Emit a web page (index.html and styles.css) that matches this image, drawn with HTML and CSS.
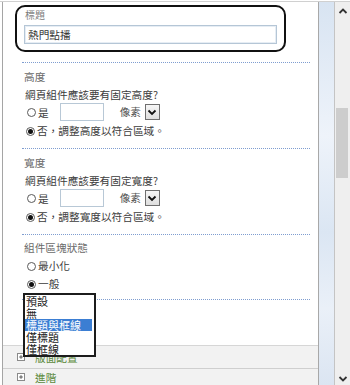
FILE: index.html
```html
<!DOCTYPE html>
<html lang="zh-Hant">
<head>
<meta charset="utf-8">
<title>網頁組件</title>
<link rel="stylesheet" href="styles.css">
</head>
<body>
<div class="window">
  <div class="panel">
    <div class="content">
      <div class="titlebox">
        <div class="label">標題</div>
        <div class="textbox">熱門點播</div>
      </div>
      <div class="sep"></div>

      <div class="group">
        <div class="heading">高度</div>
        <div class="question">網頁組件應該要有固定高度?</div>
        <div class="row-fixed">
          <span class="radio"></span><span class="opt">是</span>
          <span class="numbox"></span>
          <span class="select"><span class="sel-text">像素</span><span class="sel-btn"><svg width="10" height="7" viewBox="0 0 10 7"><path d="M1.5 1.5 L5 5 L8.5 1.5" fill="none" stroke="#111" stroke-width="1.8"/></svg></span></span>
        </div>
        <div class="row-no"><span class="radio checked"></span><span class="opt">否，調整高度以符合區域。</span></div>
      </div>
      <div class="sep"></div>

      <div class="group">
        <div class="heading">寬度</div>
        <div class="question">網頁組件應該要有固定寬度?</div>
        <div class="row-fixed">
          <span class="radio"></span><span class="opt">是</span>
          <span class="numbox"></span>
          <span class="select"><span class="sel-text">像素</span><span class="sel-btn"><svg width="10" height="7" viewBox="0 0 10 7"><path d="M1.5 1.5 L5 5 L8.5 1.5" fill="none" stroke="#111" stroke-width="1.8"/></svg></span></span>
        </div>
        <div class="row-no"><span class="radio checked"></span><span class="opt">否，調整寬度以符合區域。</span></div>
      </div>
      <div class="sep"></div>

      <div class="group">
        <div class="heading heading-state">組件區塊狀態</div>
        <div class="row-state"><span class="radio"></span><span class="opt">最小化</span></div>
        <div class="row-state"><span class="radio checked"></span><span class="opt">一般</span></div>
      </div>
      <div class="sep sep-last"></div>
    </div>

    <div class="footer">
      <div class="frow"><span class="plus"><svg width="8" height="8" viewBox="0 0 8 8"><path d="M4 1.5 V6.5 M1.5 4 H6.5" stroke="#333" stroke-width="1"/></svg></span><span class="ftext">版面配置</span></div>
      <div class="frow frow-last"><span class="plus"><svg width="8" height="8" viewBox="0 0 8 8"><path d="M4 1.5 V6.5 M1.5 4 H6.5" stroke="#333" stroke-width="1"/></svg></span><span class="ftext">進階</span></div>
    </div>

    <ul class="listbox">
      <li>預設</li>
      <li>無</li>
      <li class="selected">標題與框線</li>
      <li>僅標題</li>
      <li>僅框線</li>
    </ul>
  </div>
  <div class="strip"></div>
  <div class="scrollbar">
    <div class="arrow arrow-up"><svg width="10" height="6" viewBox="0 0 10 6"><path d="M1.5 5 L5 1.5 L8.5 5" fill="none" stroke="#333" stroke-width="1.8"/></svg></div>
    <div class="track"><div class="thumb"></div></div>
    <div class="arrow arrow-down"><svg width="10" height="6" viewBox="0 0 10 6"><path d="M1.5 1 L5 4.5 L8.5 1" fill="none" stroke="#333" stroke-width="1.8"/></svg></div>
  </div>
</div>
</body>
</html>
```

FILE: styles.css
```css
html, body {
  margin: 0;
  padding: 0;
  background: #ffffff;
}

body {
  width: 350px;
  height: 385px;
  overflow: hidden;
  font-family: "Noto Sans CJK TC", "Noto Sans", sans-serif;
  font-size: 10.67px;
  color: #444;
}

.window {
  display: flex;
  height: 384px;
  margin-top: 1px;
  border-top: 1px solid #d0d0d0;
  box-sizing: border-box;
}

.panel {
  position: relative;
  width: 316px;
  margin-left: 2px;
  border-left: 1px solid #a5a5a5;
  box-sizing: border-box;
  display: flex;
  flex-direction: column;
}

.content {
  flex: 1;
  display: flex;
  flex-direction: column;
}

.titlebox {
  margin: 3px 0 0 12px;
  width: 271px;
  height: 47px;
  border: 2px solid #111;
  border-radius: 10px;
  box-sizing: border-box;
  padding: 2px 0 0 7px;
}

.label {
  font-size: 10px;
  line-height: 12px;
  color: #7a7a7a;
  padding-left: 1px;
}

.textbox {
  margin-top: 4px;
  width: 253px;
  height: 19px;
  border: 1px solid #b5c6d6;
  box-shadow: inset 0 0 0 1px #e6edf4;
  box-sizing: border-box;
  padding-left: 3px;
  line-height: 17px;
  color: #333;
}

.sep {
  margin: 10px 8px 0 19px;
  border-top: 1px dotted #7f9dd0;
}

.sep-last {
  margin-top: 8px;
}

.group {
  padding-left: 21px;
}

.heading {
  margin-top: 7px;
  line-height: 14px;
  color: #6a6a6a;
}

.heading-state {
  margin-top: 6px;
}

.question {
  margin-top: 4px;
  line-height: 14px;
  color: #3c3c3c;
  padding-left: 1px;
}

.row-fixed {
  margin-top: 1px;
  height: 18px;
  display: flex;
  align-items: center;
  padding-left: 3px;
}

.row-no {
  margin-top: 3px;
  line-height: 14px;
  display: flex;
  align-items: center;
  padding-left: 2px;
}

.row-state {
  margin-top: 4px;
  line-height: 14px;
  display: flex;
  align-items: center;
  padding-left: 3px;
}

.radio {
  width: 9px;
  height: 9px;
  border: 1px solid #5a5a5a;
  border-radius: 50%;
  box-sizing: border-box;
  background: #fff;
  display: inline-flex;
  align-items: center;
  justify-content: center;
  flex: none;
}

.radio.checked::after {
  content: "";
  width: 5px;
  height: 5px;
  border-radius: 50%;
  background: #111;
}

.opt {
  margin-left: 2px;
  color: #3c3c3c;
}

.numbox {
  margin-left: 11px;
  width: 44px;
  height: 18px;
  border: 1px solid #b8c8d6;
  box-sizing: border-box;
  background: #fff;
}

.select {
  margin-left: 14px;
  display: inline-flex;
  align-items: center;
  height: 16px;
}

.sel-text {
  width: 27px;
  padding-left: 2px;
  box-sizing: border-box;
  color: #555;
  line-height: 16px;
}

.sel-btn {
  width: 15px;
  height: 16px;
  border: 1px solid #6f6f6f;
  box-sizing: border-box;
  background: linear-gradient(#f6f6f6, #dedede);
  display: inline-flex;
  align-items: center;
  justify-content: center;
}

.footer {
  background: #f2f2f2;
  border-top: 1px solid #d6d6d6;
}

.frow {
  height: 22px;
  display: flex;
  align-items: center;
  padding-left: 14px;
  border-bottom: 1px solid #cfcfcf;
}

.frow-last {
  height: 16px;
  border-bottom: none;
}

.plus {
  width: 8px;
  height: 8px;
  border: 1px solid #8a8a8a;
  background: #fff;
  box-sizing: border-box;
  display: inline-flex;
  align-items: center;
  justify-content: center;
}

.plus svg {
  width: 6px;
  height: 6px;
}

.ftext {
  margin-left: 10px;
  color: #5b8a3c;
}

.listbox {
  position: absolute;
  left: 20px;
  top: 291px;
  width: 73px;
  height: 64px;
  margin: 0;
  padding: 0 2px 0 0;
  list-style: none;
  border: 2px solid #1c1c1c;
  background: #fff;
  box-sizing: border-box;
  font-size: 11px;
  color: #222;
}

.listbox li {
  line-height: 12px;
  height: 12px;
  padding-left: 1px;
  white-space: nowrap;
}

.listbox li.selected {
  background: #3b7ed3;
  color: #fff;
}

.strip {
  width: 17px;
  border-left: 1px solid #a8a8a8;
  border-right: 1px solid #c4c4c4;
  box-sizing: border-box;
  background: linear-gradient(#d8e4f2, #eef3fa 35%, #dbe6f3 60%, #eaf0f8 80%, #dbe5f2);
}

.scrollbar {
  width: 15px;
  background: #efefef;
  display: flex;
  flex-direction: column;
}

.arrow {
  display: flex;
  justify-content: center;
}

.arrow-up {
  height: 17px;
  align-items: flex-start;
  padding-top: 6px;
  box-sizing: border-box;
}

.arrow-down {
  height: 14px;
  align-items: flex-end;
  padding-bottom: 3px;
  box-sizing: border-box;
}

.track {
  flex: 1;
}

.thumb {
  margin: 89px 2px 0 1px;
  height: 70px;
  background: #cdcdcd;
}
```
